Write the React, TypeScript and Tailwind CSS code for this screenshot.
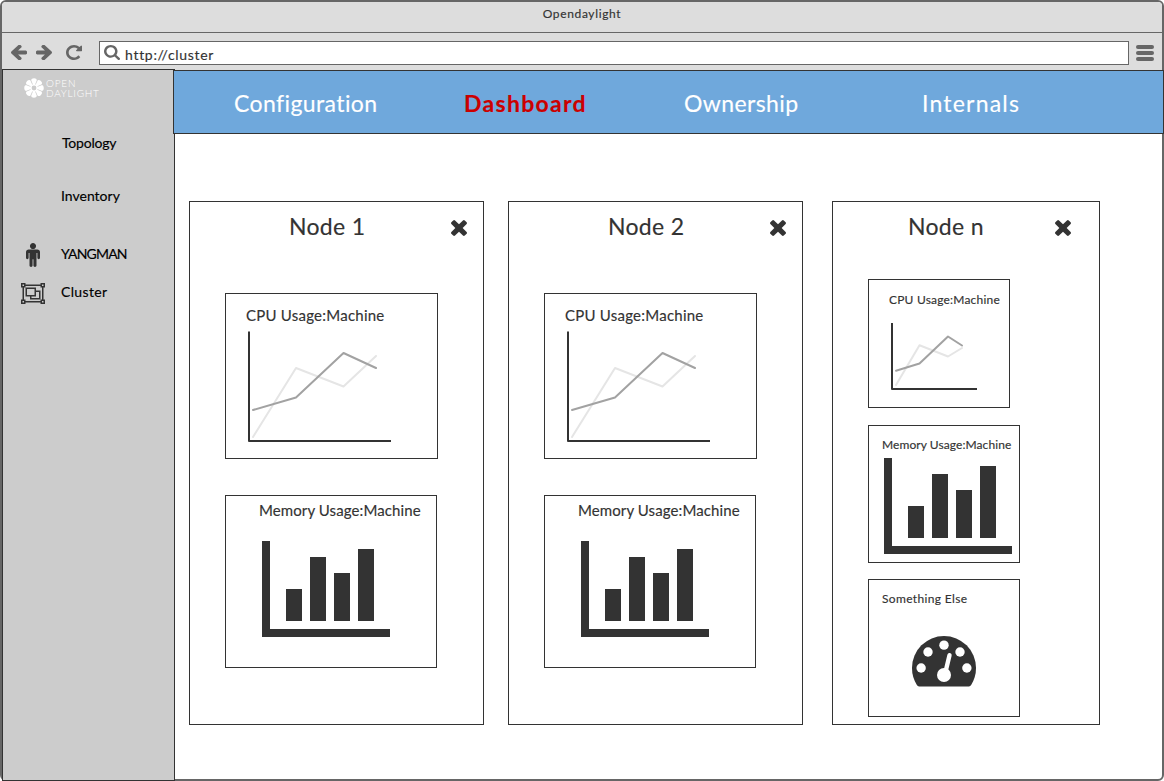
import React from "react";

type IconProps = { d: string; box: string; className: string };

const Icon = ({ d, box, className }: IconProps) => (
  <svg viewBox={box} preserveAspectRatio="none" className={className} fill="currentColor" fillRule="evenodd">
    <path d={d} />
  </svg>
);

const ARROW =
  "M1536 896v128q0 53-32.5 90.5t-84.5 37.5h-704l293 294q38 36 38 90t-38 90l-75 76q-37 37-90 37-52 0-91-37l-651-652q-37-37-37-90 0-52 37-91l651-650q38-38 91-38 52 0 90 38l75 74q38 38 38 91t-38 91l-293 293h704q52 0 84.5 37.5t32.5 90.5z";
const REPEAT =
  "M1536 256v448q0 26-19 45t-45 19h-448q-42 0-59-40-17-39 14-69l138-138q-148-137-349-137-104 0-198.5 40.5t-163.5 109.5-109.5 163.5-40.5 198.5 40.5 198.5 109.5 163.5 163.5 109.5 198.5 40.5q119 0 225-52t179-147q7-10 23-12 15 0 25 9l137 138q9 8 9.5 20.5t-7.5 22.5q-109 132-264 204.5t-327 72.5q-156 0-298-61t-245-164-164-245-61-298 61-298 164-245 245-164 298-61q147 0 284.5 55.5t244.5 156.5l130-129q29-31 70-14 39 17 39 59z";
const SEARCH =
  "M1152 832q0-185-131.5-316.5t-316.5-131.5-316.5 131.5-131.5 316.5 131.5 316.5 316.5 131.5 316.5-131.5 131.5-316.5zm512 832q0 52-38 90t-90 38q-54 0-90-38l-343-342q-179 124-399 124-143 0-273.5-55.5t-225-150-150-225-55.5-273.5 55.5-273.5 150-225 225-150 273.5-55.5 273.5 55.5 225 150 150 225 55.5 273.5q0 220-124 399l343 343q37 37 37 90z";
const TIMES =
  "M1298 1322q0 40-28 68l-136 136q-28 28-68 28t-68-28l-294-294-294 294q-28 28-68 28t-68-28l-136-136q-28-28-28-68t28-68l294-294-294-294q-28-28-28-68t28-68l136-136q28-28 68-28t68 28l294 294 294-294q28-28 68-28t68 28l136 136q28 28 28 68t-28 68l-294 294 294 294q28 28 28 68z";
const MALE =
  "M1024 832v416q0 40-28 68t-68 28-68-28-28-68v-352h-64v912q0 46-33 79t-79 33-79-33-33-79v-464h-64v464q0 46-33 79t-79 33-79-33-33-79v-912h-64v352q0 40-28 68t-68 28-68-28-28-68v-416q0-80 56-136t136-56h640q80 0 136 56t56 136zm-288-448q0 93-65.5 158.5t-158.5 65.5-158.5-65.5-65.5-158.5 65.5-158.5 158.5-65.5 158.5 65.5 65.5 158.5z";
const GROUP =
  "M0 0h3v1h10v-1h3v3h-1v8h1v3h-3v-1h-10v1h-3v-3h1v-8h-1zM1 1v1h1v-1zM14 1v1h1v-1zM1 12v1h1v-1zM14 12v1h1v-1zM3 2v1h-1v8h1v1h10v-1h1v-8h-1v-1zM3 3h7v2h3v6h-7v-2h-3zM4 4v4h5v-4zM10 6v3h-3v1h5v-4z";

const Logo = () => (
  <svg viewBox="0 0 20 20" className="mt-2 h-5 w-5 shrink-0">
    {[0, 45, 90, 135, 180, 225, 270, 315].map((a) => (
      <path key={a} d="M9.1 7L7.1 1.9Q7.5 .3 10 .2T12.9 1.9L10.9 7z" fill="#fff" transform={`rotate(${a} 10 10)`} />
    ))}
    <circle cx="10" cy="10" r="3.7" fill="#fff" />
    <circle cx="10" cy="10" r="2.4" fill="#ccc" />
  </svg>
);

type LineChartProps = { className: string; box: string; axis: string; dark: string; light: string };

const LineChart = ({ className, box, axis, dark, light }: LineChartProps) => (
  <svg viewBox={box} className={className} fill="none" strokeWidth="2" strokeLinecap="round" strokeLinejoin="round">
    <polyline points={light} stroke="#e5e5e5" />
    <polyline points={dark} stroke="#a2a2a2" />
    <path d={axis} stroke="#333" strokeLinecap="butt" />
  </svg>
);

const LargeLineChart = () => (
  <LineChart
    className="ml-[22px] mt-1 h-[111px] w-[143px]"
    box="0 0 143 111"
    axis="M1 0.5V110H143"
    dark="5,79 48,66.5 95.5,22 128,37"
    light="5,106 48,37 95.5,55.5 128,25"
  />
);

const SmallLineChart = () => (
  <LineChart
    className="ml-[22px] mt-[11px] h-[67px] w-[86px]"
    box="0 0 86 67"
    axis="M1 0V66H86"
    dark="5,47.7 28.5,40.5 57,13.5 71,22.5"
    light="5,62 28.5,22.3 57,33.5 71,25"
  />
);

const BarChart = ({ className }: { className: string }) => (
  <svg viewBox="0 0 128 96" className={`h-24 w-32 ${className}`} fill="#333" shapeRendering="crispEdges">
    <path d="M0 0h8v88h120v8H0zM24 48h16v32H24zM48 16h16v64H48zM72 32h16v48H72zM96 8h16v72H96z" />
  </svg>
);

const Gauge = () => (
  <svg viewBox="0 0 64 51" className="ml-[43px] mt-[25px] h-[51px] w-16" fill="#fff">
    <path d="M32 0A32 32 0 0 1 64 32Q64 41.3 59 49.3Q58.2 50.4 57 50.4H7Q5.8 50.4 5 49.3Q0 41.3 0 32A32 32 0 0 1 32 0Z" fill="#333" />
    <circle cx="9.14" cy="32" r="4.7" />
    <circle cx="16" cy="16" r="4.7" />
    <circle cx="32" cy="9.14" r="4.7" />
    <circle cx="48" cy="16" r="4.7" />
    <circle cx="54.86" cy="32" r="4.7" />
    <circle cx="32" cy="39" r="7" />
    <path d="M33.5 36L37.5 19.2" stroke="#fff" strokeWidth="4.4" strokeLinecap="round" />
  </svg>
);

const NodeHeader = ({ name, close }: { name: string; close: string }) => (
  <div className="flex h-9 items-start pt-3">
    <h2 className={`text-[23px] leading-6 tracking-[0.3px] ${close}`}>{name}</h2>
    <Icon d={TIMES} box="110 366 1188 1188" className="mt-1.5 h-4 w-4" />
  </div>
);

const WideNode = ({ name }: { name: string }) => (
  <section className="h-[524px] w-[295px] border border-[#333] bg-white">
    <NodeHeader name={name} close="ml-[99px] w-[162px]" />
    <div className="ml-[35px] mt-[55px] h-[166px] w-[213px] border border-[#333] pt-[9px]">
      <h3 className="ml-5 text-[15px] leading-6 tracking-[0.24px]">CPU Usage:Machine</h3>
      <LargeLineChart />
    </div>
    <div className="ml-[35px] mt-9 h-[173px] w-[212px] border border-[#333] pt-0.5">
      <h3 className="ml-[33px] text-[15px] leading-6 tracking-[0.1px]">Memory Usage:Machine</h3>
      <BarChart className="ml-9 mt-[19px]" />
    </div>
  </section>
);

const CompactNode = () => (
  <section className="ml-[5px] h-[524px] w-[268px] border border-[#333] bg-white">
    <NodeHeader name="Node n" close="ml-[75px] w-[147px]" />
    <div className="ml-[35px] mt-[41px] h-[129px] w-[142px] border border-[#333] pt-2">
      <h3 className="ml-5 text-[12px] leading-6 tracking-[0.2px]">CPU Usage:Machine</h3>
      <SmallLineChart />
    </div>
    <div className="ml-[35px] mt-[17px] h-[138px] w-[152px] border border-[#333] pt-[7px]">
      <h3 className="ml-[13px] text-[12px] leading-6 tracking-[0.08px]">Memory Usage:Machine</h3>
      <BarChart className="ml-[15px] mt-px" />
    </div>
    <div className="ml-[35px] mt-4 h-[138px] w-[152px] border border-[#333] pt-[7px]">
      <h3 className="ml-[13px] text-[12px] leading-6 tracking-[0.35px]">Something Else</h3>
      <Gauge />
    </div>
  </section>
);

const Sidebar = () => (
  <aside className="h-[712px] w-[173px] shrink-0 border border-[#333] bg-[#ccc] text-[14px] leading-6 text-black">
    <div className="flex h-[61px] pl-[21px]">
      <Logo />
      <div className="ml-0.5 mt-2 text-[10px] font-light leading-[10px] text-white [-webkit-text-stroke:0px]">
        <div className="tracking-[0.8px]">OPEN</div>
        <div className="tracking-[0.75px]">DAYLIGHT</div>
      </div>
    </div>
    <div className="pl-[59px] tracking-[-0.2px]">Topology</div>
    <div className="mt-[29px] pl-[58px]">Inventory</div>
    <div className="mt-[34px] flex h-6 pl-[23px] text-[#333]">
      <Icon d={MALE} box="0 160 1024 1760" className="mt-px h-6 w-3.5" />
      <span className="ml-[21px] tracking-[-0.8px] text-black">YANGMAN</span>
    </div>
    <div className="mt-3.5 flex pl-[18px] text-[#333]">
      <Icon d={GROUP} box="0 0 16 14" className="mt-[3px] h-[21px] w-6" />
      <span className="ml-4 tracking-[0.35px] text-black">Cluster</span>
    </div>
  </aside>
);

export default function App() {
  return (
    <div className="h-[781px] w-[1164px] overflow-hidden">
      <div className="flex h-[781px] w-[1164px] flex-col rounded-md border-2 border-[#666] bg-white font-['Lato',sans-serif] text-[#333] [-webkit-text-stroke:0.15px]">
        <div className="h-[31px] shrink-0 rounded-t border-b border-[#666] bg-[#ddd] text-center text-[12px] leading-6 tracking-[0.65px]">
          Opendaylight
        </div>
        <div className="flex h-9 shrink-0 bg-[#ddd] pl-[9px] pt-2 text-[#666]">
          <Icon d={ARROW} box="64 219 1472 1483" className="mt-1 h-[15px] w-4" />
          <Icon d={ARROW} box="64 219 1472 1483" className="ml-[9px] mt-1 h-[15px] w-4 -scale-x-100" />
          <Icon d={REPEAT} box="0 128 1536 1536" className="ml-3.5 mt-1 h-[15px] w-4" />
          <div className="ml-[17px] flex h-6 w-[1030px] border border-[#666] bg-white pl-1">
            <Icon d={SEARCH} box="0 128 1664 1664" className="mt-[3px] h-[15px] w-4" />
            <span className="ml-[5px] pt-0.5 text-[14px] leading-[22px] tracking-[0.7px] text-[#333]">http://cluster</span>
          </div>
          <div className="ml-[7px] mt-1 flex w-[18px] flex-col gap-0.5">
            <i className="h-1 rounded-full bg-[#666]" />
            <i className="h-1 rounded-full bg-[#666]" />
            <i className="h-1 rounded-full bg-[#666]" />
          </div>
        </div>
        <div className="flex h-[710px] shrink-0">
          <Sidebar />
          <main className="-ml-px shrink-0">
            <div className="ml-px h-px w-[987px] bg-[#ddd]" />
            <nav className="-ml-px flex h-16 w-[991px] border border-[#333] bg-[#6fa8dc] pl-[60px] pt-5 text-[23px] leading-6 tracking-[0.4px] text-white">
              <a className="w-[230px]">Configuration</a>
              <a className="w-[220px] font-bold tracking-[1.3px] text-[#c00]">Dashboard</a>
              <a className="w-[238px]">Ownership</a>
              <a className="tracking-[1.2px]">Internals</a>
            </nav>
            <div className="ml-[15px] mt-[67px] flex gap-6">
              <WideNode name="Node 1" />
              <WideNode name="Node 2" />
              <CompactNode />
            </div>
          </main>
        </div>
      </div>
    </div>
  );
}
